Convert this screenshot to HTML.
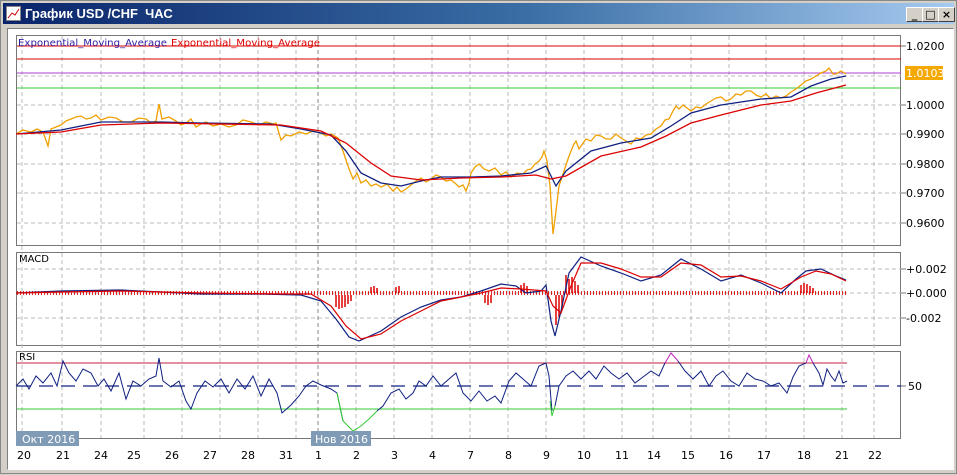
<!DOCTYPE html><html><head><meta charset="utf-8"><style>
body{margin:0;width:957px;height:474px;overflow:hidden;background:#d4d0c8;font-family:"Liberation Sans","DejaVu Sans",sans-serif}
.win{position:absolute;left:0;top:0;width:955px;height:472px;border:1px solid #888;background:#d4d0c8}
.title{position:absolute;left:2px;top:2px;width:951px;height:21px;background:linear-gradient(90deg,#0a246a,#3a6ea5 55%,#a6caf0);color:#fff;font:bold 13px "Liberation Sans",sans-serif;line-height:21px}
.title span{position:absolute;left:22px}
.btn{position:absolute;top:4px;width:15px;height:13px;background:#d4d0c8;border:1px solid;border-color:#fff #404040 #404040 #fff;color:#000;font:bold 11px "DejaVu Sans",sans-serif;text-align:center;line-height:13px}
.client{position:absolute;left:6px;top:27px;width:945px;height:440px;background:#fff;border:1px solid;border-color:#808080 #fff #fff #808080}
</style></head><body><div class="win">
<div class="title"><svg style="position:absolute;left:3px;top:3px" width="15" height="15"><rect x="0.5" y="0.5" width="14" height="14" fill="#fff" stroke="#888"/><path d="M2 12 L6 7 L9 9 L13 3" stroke="#c00" fill="none"/></svg><span>График USD /CHF &nbsp;ЧАС</span>
<div class="btn" style="left:903px">_</div><div class="btn" style="left:919px">□</div><div class="btn" style="left:935px">×</div></div>
<div class="client"></div>
<svg style="position:absolute;left:0;top:0" width="957" height="474" font-family="DejaVu Sans,Liberation Sans,sans-serif">
<g fill="none" stroke="#777">
<rect x="15.5" y="34.5" width="884" height="210"/>
<rect x="15.5" y="251.5" width="884" height="93"/>
<rect x="15.5" y="350.5" width="884" height="87"/>
</g>
<g stroke="#bbb" stroke-dasharray="4 3">
<path d="M21 35V437M61 35V437M100 35V437M143 35V437M181 35V437M219 35V437M257 35V437M295 35V437M355 35V437M393 35V437M431 35V437M469 35V437M507 35V437M545 35V437M583 35V437M621 35V437M652 35V437M690 35V437M728 35V437M765 35V437M803 35V437M841 35V437M873 35V437"/>
<path d="M16 75H900M16 104H900M16 133H900M16 163H900M16 192H900M16 222H900M16 268H900M16 292H900M16 317H900"/>
</g>
<path d="M317 35V437" stroke="#888" stroke-dasharray="4 3"/>
<g fill="#000" font-size="11">
<path d="M900 45h5M900 104h5M900 133h5M900 163h5M900 192h5M900 222h5M900 268h5M900 292h5M900 317h5M900 385h5" stroke="#777"/>
<text x="905" y="49">1.0200</text><text x="905" y="108">1.0000</text><text x="905" y="137">0.9900</text><text x="905" y="167">0.9800</text><text x="905" y="196">0.9700</text><text x="905" y="226">0.9600</text>
<text x="905" y="272">+0.002</text><text x="905" y="296">+0.000</text><text x="905" y="321">-0.002</text><text x="907" y="389">50</text>
</g>
<rect x="904" y="65" width="38" height="14" fill="#f5a800"/><text x="905" y="76" font-size="11" fill="#fff">1.0103</text>
<path d="M16 45H900M16 58H900" stroke="#d00"/><path d="M16 72H900" stroke="#b040d0"/><path d="M16 87H900" stroke="#3c3"/>
<text x="17" y="45" font-size="10" fill="#3020a0" textLength="149" lengthAdjust="spacingAndGlyphs">Exponential_Moving_Average</text><text x="170" y="45" font-size="10" fill="#d00" textLength="149" lengthAdjust="spacingAndGlyphs">Exponential_Moving_Average</text>
<polyline fill="none" stroke="#f0a000" stroke-width="1.3" points="15,133 22,129 30,131 36,128 42,131 47,145 50,128 55,126 60,124 65,120 70,118 75,116 80,115 85,118 90,117 95,114 100,119 108,116 115,117 122,121 130,121 138,117 145,118 150,122 155,120 158,103 161,118 168,116 175,120 180,124 185,122 190,118 195,126 200,123 205,121 212,125 220,123 228,126 235,124 242,119 250,121 258,124 265,121 272,123 275,122 280,139 285,134 290,135 298,131 305,133 312,130 320,132 325,135 330,133 337,137 342,150 347,165 352,178 356,172 360,182 365,179 370,185 375,183 380,186 386,183 392,190 396,186 400,191 405,188 410,184 415,180 420,177 425,181 430,178 435,174 440,176 445,180 450,179 455,183 458,186 462,184 465,190 468,182 470,172 474,166 478,163 483,168 488,170 494,167 500,174 505,171 510,176 516,172 522,173 526,169 530,168 534,163 538,160 541,156 543,150 546,160 549,185 552,233 555,210 558,185 561,176 563,170 567,158 570,150 573,143 575,140 578,148 580,145 585,138 590,140 595,134 600,135 605,138 610,138 615,133 620,137 625,140 630,143 635,137 640,138 645,134 650,133 655,128 660,125 664,119 668,118 672,110 675,105 678,108 682,104 686,107 690,110 695,106 700,107 705,103 710,100 715,97 720,96 725,100 730,98 735,93 740,94 745,90 750,90 755,94 760,96 765,93 770,98 775,95 780,97 785,95 790,91 795,88 800,84 805,80 810,78 815,75 820,72 825,70 828,67 832,73 835,73 840,70 845,73"/>
<polyline fill="none" stroke="#102080" stroke-width="1.3" points="15,133 60,129 100,121 160,121 200,122 270,123 300,128 330,134 345,150 360,172 380,182 400,185 420,180 440,176 470,176 500,175 530,172 545,165 555,185 565,170 590,150 620,142 650,137 670,125 690,112 720,104 760,98 790,96 810,85 830,78 845,75"/>
<polyline fill="none" stroke="#d00" stroke-width="1.3" points="15,133 60,131 100,124 160,122 220,123 280,124 320,130 345,142 370,162 390,175 420,179 460,177 500,176 535,174 550,178 565,175 600,155 640,146 665,135 690,122 720,114 760,104 790,100 815,92 830,88 845,84"/>
<text x="18" y="261" font-size="10" fill="#000">MACD</text>
<path d="M16 292H845" stroke="#d00" stroke-width="4" stroke-dasharray="1 2" opacity=".85"/>
<path d="M335 294v12M338 294v14M341 294v13M344 294v12M347 294v9M350 294v6M555 294v30M558 294v22M561 294v14M565 292v-18M568 292v-14M571 292v-16M574 292v-12M577 292v-8M520 292v-8M523 292v-10M526 292v-7M490 294v8M487 294v10M484 294v8M370 292v-6M373 292v-7M376 292v-5M395 292v-6M398 292v-7M800 292v-8M803 292v-10M806 292v-9M809 292v-7M812 292v-5" stroke="#d00" stroke-width="1.5"/>
<polyline fill="none" stroke="#102080" stroke-width="1.2" points="15,292 60,290 120,289 160,291 200,293 260,293 300,294 320,300 335,318 348,336 358,340 380,330 400,316 420,306 440,299 460,296 480,290 500,283 515,285 525,292 540,290 545,284 550,320 554,335 560,310 568,272 580,256 600,265 620,272 640,280 660,274 680,258 700,268 720,280 740,274 760,282 780,292 795,278 805,270 820,268 835,275 845,279"/>
<polyline fill="none" stroke="#d00" stroke-width="1.2" points="15,292 60,291 120,290 200,292 280,293 310,293 330,305 345,325 360,338 380,333 400,320 420,310 440,300 460,296 480,292 500,287 520,288 545,290 552,305 560,312 570,285 580,262 600,262 620,268 640,276 660,276 680,262 700,264 720,276 740,275 760,280 780,288 800,276 815,270 830,273 845,280"/>
<text x="18" y="359" font-size="10" fill="#000">RSI</text>
<path d="M16 362H846" stroke="#c02040"/><path d="M16 408H846" stroke="#3c3"/>
<path d="M16 385H900" stroke="#102080" stroke-width="1.3" stroke-dasharray="14 8"/>
<polyline fill="none" stroke="#102080" points="15,385 22,378 28,388 35,375 42,382 50,372 56,385 62,360 68,372 75,380 82,368 90,372 97,385 103,378 110,390 118,372 125,398 132,380 140,385 148,378 155,375 158,357 162,380 170,386 178,380 185,400 190,408 196,392 204,380 212,386 220,378 228,392 236,378 244,388 252,375 260,395 268,378 276,392 281,412 290,404 298,395 305,385 312,380 320,384 330,388 336,392 342,420"/>
<polyline fill="none" stroke="#3c3" points="336,392 342,420 352,430 360,425 368,418 376,410"/>
<polyline fill="none" stroke="#102080" points="376,410 382,405 390,392 398,388 405,398 412,392 418,380 425,385 432,375 440,385 448,378 455,372 462,392 470,400 478,390 486,400 494,395 500,402 508,380 515,372 522,378 530,385 538,365 545,362 548,375 551,410"/>
<polyline fill="none" stroke="#3c3" points="549,400 551,415 554,405"/>
<polyline fill="none" stroke="#102080" points="554,405 558,385 565,375 572,370 580,378 588,370 595,378 603,365 610,372 618,378 626,372 634,382 642,376 650,370 658,375 664,362"/>
<polyline fill="none" stroke="#c020c0" points="664,362 670,352 677,360"/>
<polyline fill="none" stroke="#102080" points="677,360 684,370 692,378 700,370 708,385 715,375 722,370 730,380 738,385 746,372 754,378 762,380 770,385 778,382 786,392 792,376 798,365 805,362"/>
<polyline fill="none" stroke="#c020c0" points="805,362 808,354 812,362"/>
<polyline fill="none" stroke="#102080" points="812,362 818,372 822,384 826,368 830,375 834,380 838,370 842,382 846,380"/>
<rect x="15" y="430" width="63" height="15" fill="#7f9bb5"/><text x="21" y="442" font-size="11" fill="#fff">Окт 2016</text>
<rect x="310" y="430" width="60" height="15" fill="#7f9bb5"/><text x="314" y="442" font-size="11" fill="#fff">Нов 2016</text>
<g font-size="11" fill="#000">
<text x="16" y="458">20</text><text x="55" y="458">21</text><text x="93" y="458">24</text><text x="126" y="458">25</text><text x="164" y="458">26</text><text x="202" y="458">27</text><text x="240" y="458">28</text><text x="278" y="458">31</text><text x="314" y="458">1</text><text x="352" y="458">2</text><text x="390" y="458">3</text><text x="428" y="458">4</text><text x="466" y="458">7</text><text x="504" y="458">8</text><text x="542" y="458">9</text><text x="576" y="458">10</text><text x="614" y="458">11</text><text x="646" y="458">14</text><text x="680" y="458">15</text><text x="718" y="458">16</text><text x="756" y="458">17</text><text x="796" y="458">18</text><text x="834" y="458">21</text><text x="867" y="458">22</text>
</g>
</svg></div></body></html>
